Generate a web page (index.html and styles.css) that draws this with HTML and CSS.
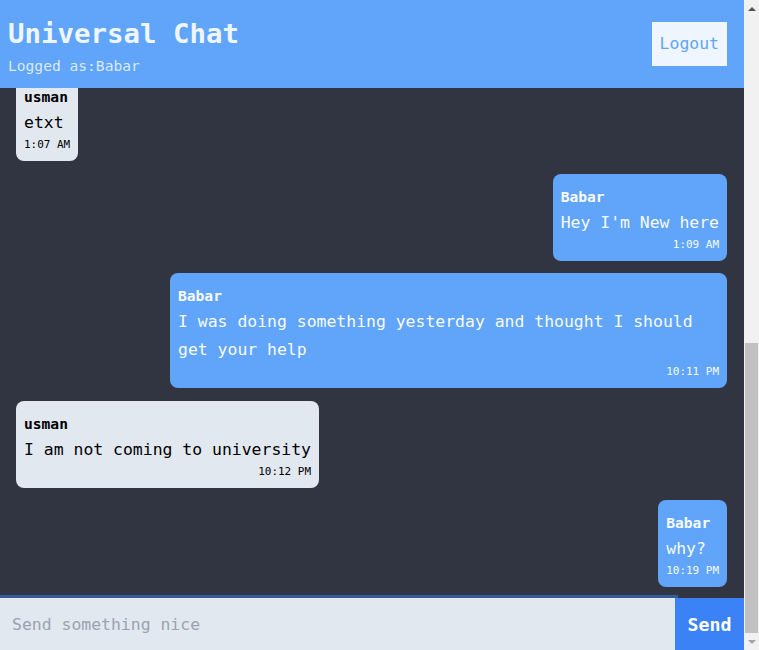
FILE: index.html
```html
<!DOCTYPE html>
<html lang="en">
<head>
<meta charset="utf-8">
<title>Universal Chat</title>
<link rel="stylesheet" href="styles.css">
</head>
<body>
<div class="app">
  <header class="topbar">
    <div class="brand">
      <h1 class="brand-title">Universal Chat</h1>
      <p class="brand-sub">Logged as:Babar</p>
    </div>
    <button class="logout" type="button">Logout</button>
  </header>

  <main class="chat">
    <div class="msg in"><div class="name">usman</div><p class="text">etxt</p><div class="time">1:07 AM</div></div>
    <div class="msg out"><div class="name">Babar</div><p class="text">Hey I'm New here</p><div class="time">1:09 AM</div></div>
    <div class="msg out"><div class="name">Babar</div><p class="text">I was doing something yesterday and thought I should get your help</p><div class="time">10:11 PM</div></div>
    <div class="msg in"><div class="name">usman</div><p class="text">I am not coming to university</p><div class="time">10:12 PM</div></div>
    <div class="msg out"><div class="name">Babar</div><p class="text">why?</p><div class="time">10:19 PM</div></div>
  </main>

  <form class="composer" onsubmit="return false">
    <input class="composer-input" type="text" placeholder="Send something nice" autofocus>
    <button class="composer-send" type="submit">Send</button>
  </form>
</div>

<div class="scrollbar" aria-hidden="true">
  <div class="sb-btn"><span class="sb-arrow up"></span></div>
  <div class="sb-track"><div class="sb-thumb"></div></div>
  <div class="sb-btn"><span class="sb-arrow down"></span></div>
</div>
</body>
</html>
```

FILE: styles.css
```css
* { box-sizing: border-box; }

html, body {
  margin: 0;
  padding: 0;
  height: 100%;
}

body {
  display: flex;
  overflow: hidden;
  background: #313541;
  font-family: "DejaVu Sans Mono", "Liberation Mono", monospace;
}

.app {
  flex: 1;
  min-width: 0;
  display: flex;
  flex-direction: column;
}

.topbar {
  flex: 0 0 88px;
  position: relative;
  z-index: 2;
  background: #60a5fa;
  display: flex;
  justify-content: space-between;
  padding: 0 17px 0 8px;
}

.brand {
  padding-top: 16px;
}

.brand-title {
  margin: 0;
  font-size: 27.4px;
  line-height: 36px;
  font-weight: bold;
  color: #eff6ff;
}

.brand-sub {
  margin: 2px 0 0;
  font-size: 14.6px;
  line-height: 24px;
  color: #dbeafe;
}

.logout {
  align-self: center;
  background: #eff6ff;
  color: #60a5fa;
  border: 0;
  padding: 8px;
  font-family: inherit;
  font-size: 16.45px;
  line-height: 28px;
}

.chat {
  flex: 1;
  min-height: 0;
  overflow: hidden;
  display: flex;
  flex-direction: column;
  justify-content: flex-end;
  gap: 12.5px;
  padding: 0 17px 11px 16px;
}

.msg {
  flex: none;
  max-width: 557px;
  padding: 11px 8px 8px;
  border-radius: 8px;
}

.msg.in {
  align-self: flex-start;
  background: #e2e8f0;
  color: #000;
}

.msg.out {
  align-self: flex-end;
  background: #60a5fa;
  color: #f8fafc;
}

.name {
  font-weight: bold;
  font-size: 14.6px;
  line-height: 24px;
}

.text {
  margin: 0;
  font-size: 16.45px;
  line-height: 28px;
}

.time {
  font-size: 10.96px;
  line-height: 16px;
  text-align: right;
}

.composer {
  flex: 0 0 52px;
  position: relative;
  z-index: 2;
  margin: 0;
  display: flex;
}

.composer-input {
  flex: 1;
  min-width: 0;
  border: 0;
  outline: none;
  background: #e2e8f0;
  padding: 0 12px;
  font-family: inherit;
  font-size: 16.45px;
  color: #111827;
  caret-color: #000;
  box-shadow: 0 0 0 3px rgba(59, 130, 246, 0.5);
}

.composer-input::placeholder {
  color: #9ca3af;
}

.composer-send {
  position: relative;
  width: 69px;
  border: 0;
  background: #3b82f6;
  color: #fff;
  padding: 0 12px;
  font-family: inherit;
  font-size: 18.3px;
  font-weight: bold;
}

/* classic scrollbar, page scrolled to the bottom */
.scrollbar {
  flex: 0 0 15px;
  display: flex;
  flex-direction: column;
  background: #f1f1f1;
}

.sb-btn {
  flex: 0 0 17px;
  display: flex;
  align-items: center;
  justify-content: center;
}

.sb-arrow {
  width: 0;
  height: 0;
  border-left: 4px solid transparent;
  border-right: 4px solid transparent;
}

.sb-arrow.up {
  border-bottom: 4px solid #505050;
}

.sb-arrow.down {
  border-top: 4px solid #a3a3a3;
}

.sb-track {
  flex: 1;
  display: flex;
  flex-direction: column;
  justify-content: flex-end;
  padding: 0 1px;
}

.sb-thumb {
  height: 290px;
  background: #c1c1c1;
}
```
